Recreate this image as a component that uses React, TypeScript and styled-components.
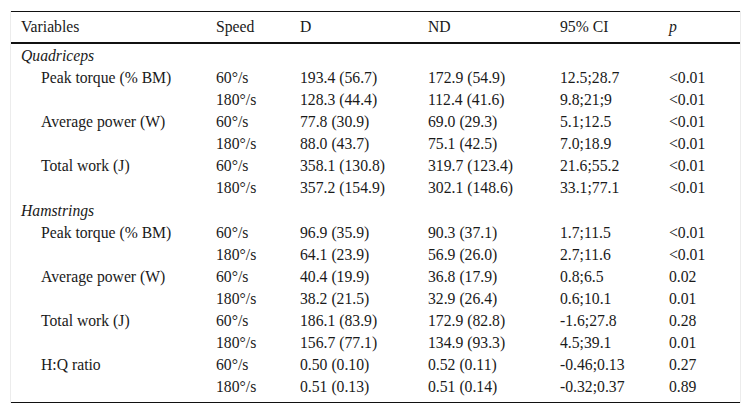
import { Fragment } from "react";
import styled, { createGlobalStyle } from "styled-components";

const GlobalStyle = createGlobalStyle`
  html, body {
    margin: 0;
    padding: 0;
    background: #fff;
  }
`;

type Row = {
  label?: string;
  speed: string;
  d: string;
  nd: string;
  ci: string;
  p: string;
};

type Group = {
  title: string;
  rows: Row[];
};

const groups: Group[] = [
  {
    title: "Quadriceps",
    rows: [
      { label: "Peak torque (% BM)", speed: "60°/s", d: "193.4 (56.7)", nd: "172.9 (54.9)", ci: "12.5;28.7", p: "<0.01" },
      { speed: "180°/s", d: "128.3 (44.4)", nd: "112.4 (41.6)", ci: "9.8;21;9", p: "<0.01" },
      { label: "Average power (W)", speed: "60°/s", d: "77.8 (30.9)", nd: "69.0 (29.3)", ci: "5.1;12.5", p: "<0.01" },
      { speed: "180°/s", d: "88.0 (43.7)", nd: "75.1 (42.5)", ci: "7.0;18.9", p: "<0.01" },
      { label: "Total work (J)", speed: "60°/s", d: "358.1 (130.8)", nd: "319.7 (123.4)", ci: "21.6;55.2", p: "<0.01" },
      { speed: "180°/s", d: "357.2 (154.9)", nd: "302.1 (148.6)", ci: "33.1;77.1", p: "<0.01" },
    ],
  },
  {
    title: "Hamstrings",
    rows: [
      { label: "Peak torque (% BM)", speed: "60°/s", d: "96.9 (35.9)", nd: "90.3 (37.1)", ci: "1.7;11.5", p: "<0.01" },
      { speed: "180°/s", d: "64.1 (23.9)", nd: "56.9 (26.0)", ci: "2.7;11.6", p: "<0.01" },
      { label: "Average power (W)", speed: "60°/s", d: "40.4 (19.9)", nd: "36.8 (17.9)", ci: "0.8;6.5", p: "0.02" },
      { speed: "180°/s", d: "38.2 (21.5)", nd: "32.9 (26.4)", ci: "0.6;10.1", p: "0.01" },
      { label: "Total work (J)", speed: "60°/s", d: "186.1 (83.9)", nd: "172.9 (82.8)", ci: "-1.6;27.8", p: "0.28" },
      { speed: "180°/s", d: "156.7 (77.1)", nd: "134.9 (93.3)", ci: "4.5;39.1", p: "0.01" },
      { label: "H:Q ratio", speed: "60°/s", d: "0.50 (0.10)", nd: "0.52 (0.11)", ci: "-0.46;0.13", p: "0.27" },
      { speed: "180°/s", d: "0.51 (0.13)", nd: "0.51 (0.14)", ci: "-0.32;0.37", p: "0.89" },
    ],
  },
];

const colWidths = [195, 84, 128, 132, 109, 81];

const App = () => {
  return (
    <>
      <GlobalStyle />
      <Frame>
        <Table>
          <colgroup>
            {colWidths.map((w, i) => (
              <col key={i} style={{ width: w }} />
            ))}
          </colgroup>
          <thead>
            <HeadRow>
              <Th>Variables</Th>
              <Th>Speed</Th>
              <Th>D</Th>
              <Th>ND</Th>
              <Th>95% CI</Th>
              <Th>
                <i>p</i>
              </Th>
            </HeadRow>
          </thead>
          <Body>
            {groups.map((g) => (
              <Fragment key={g.title}>
                <tr>
                  <GroupCell colSpan={6}>{g.title}</GroupCell>
                </tr>
                {g.rows.map((r, i) => (
                  <tr key={i}>
                    <Td $indent>{r.label ?? ""}</Td>
                    <Td>{r.speed}</Td>
                    <Td>{r.d}</Td>
                    <Td>{r.nd}</Td>
                    <Td>{r.ci}</Td>
                    <Td>{r.p}</Td>
                  </tr>
                ))}
              </Fragment>
            ))}
            <tr>
              <Spacer colSpan={6} />
            </tr>
          </Body>
        </Table>
      </Frame>
    </>
  );
};

const Frame = styled.div`
  margin: 11px 0 0 10px;
  width: 729px;
  border-left: 1px solid #ececec;
  border-right: 1px solid #ececec;
`;

const Table = styled.table`
  width: 729px;
  table-layout: fixed;
  border-collapse: collapse;
  font-family: "Liberation Serif", "Times New Roman", serif;
  font-size: 15.7px;
  color: #1a1a1a;
`;

const HeadRow = styled.tr`
  border-top: 1px solid #111;
  border-bottom: 2px solid #111;
`;

const Th = styled.th`
  height: 30px;
  padding: 0 10px;
  text-align: left;
  font-weight: normal;
  white-space: nowrap;
`;

const Body = styled.tbody`
  border-bottom: 1px solid #111;
`;

const GroupCell = styled.td`
  height: 23px;
  padding: 0 10px;
  font-style: italic;
  vertical-align: middle;
`;

const Td = styled.td<{ $indent?: boolean }>`
  height: 22px;
  padding: 0 10px 0 ${(p) => (p.$indent ? "30px" : "10px")};
  white-space: nowrap;
  vertical-align: middle;
`;

const Spacer = styled.td`
  height: 4px;
  padding: 0;
`;

export default App;
